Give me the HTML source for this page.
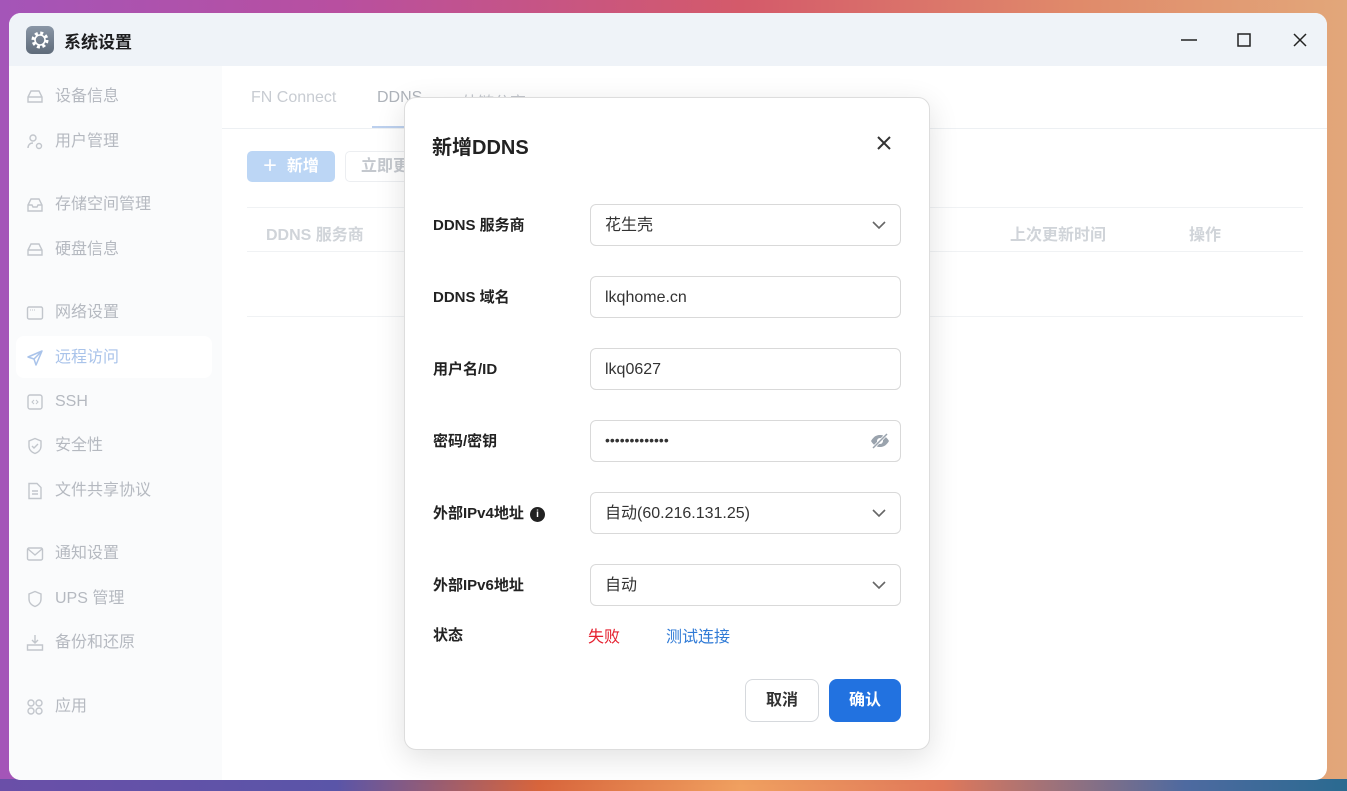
<!DOCTYPE html>
<html><head><meta charset="utf-8"><style>
*{box-sizing:border-box;margin:0;padding:0}
body{width:1347px;height:791px;overflow:hidden;position:relative;font-family:"Liberation Sans","Noto Sans CJK SC",sans-serif;
background:linear-gradient(90deg,#a455b8 0%,#b84fa0 25%,#d45a6a 55%,#e08a6a 80%,#e2a77a 100%);}
.bot{position:absolute;left:0;right:0;bottom:0;height:12px;background:linear-gradient(90deg,#6a4fa8 0%,#5a55a8 25%,#d8653c 40%,#f0a060 55%,#e0785a 70%,#4e6aa0 88%,#2a6a90 100%)}
.win{position:absolute;left:9px;top:13px;width:1318px;height:767px;background:#fff;border-radius:12px;overflow:hidden}
.tb{position:absolute;left:0;top:0;right:0;height:53px;background:#eff3f8}
.logo{position:absolute;left:17px;top:13px;width:28px;height:28px;border-radius:6px;background:linear-gradient(#8a96a6,#5f6b7a)}
.ttl{position:absolute;left:55px;top:15px;font-size:17px;font-weight:bold;color:#1d1d1f}
.side{position:absolute;left:0;top:53px;width:213px;bottom:0;background:#fafbfc}
.it{position:absolute;left:46px;font-size:16px;color:#b5b9c0;line-height:20px}
.ic{position:absolute;left:17px;width:18px;height:18px}
.act{position:absolute;left:7px;top:270px;width:196px;height:42px;background:#fff;border-radius:8px}
.c{position:absolute;color:#c4c8ce;font-size:16px}
.dlg{position:absolute;left:404px;top:97px;width:526px;height:653px;background:#fff;border-radius:12px;border:1px solid #ddd;box-shadow:0 8px 30px rgba(0,0,0,.12)}
.lb{position:absolute;left:28px;font-size:15px;font-weight:bold;color:#222}
.in{position:absolute;left:185px;width:311px;height:42px;border:1px solid #d9d9d9;border-radius:6px;font-size:16px;color:#333;padding-left:14px;line-height:41px}
.chev{position:absolute;right:14px;top:15px}
</style></head><body>
<div class="bot"></div>
<div class="win">
 <div class="tb">
  <div class="logo"><svg width="28" height="28" viewBox="0 0 28 28"><circle cx="14" cy="14" r="7" fill="none" stroke="#fff" stroke-width="3" stroke-dasharray="3 2.5"/><circle cx="14" cy="14" r="5" fill="none" stroke="#fff" stroke-width="1.6"/></svg></div>
  <div class="ttl">系统设置</div>
  <svg style="position:absolute;left:1170px;top:17px" width="20" height="20"><line x1="2" y1="10" x2="18" y2="10" stroke="#222" stroke-width="1.6"/></svg>
  <svg style="position:absolute;left:1225px;top:17px" width="20" height="20"><rect x="4" y="4" width="12" height="12" fill="none" stroke="#222" stroke-width="1.5"/></svg>
  <svg style="position:absolute;left:1281px;top:17px" width="20" height="20"><path d="M4 4L16 16M16 4L4 16" stroke="#222" stroke-width="1.5"/></svg>
 </div>
 <div class="side">
  <div class="act"></div>
  <svg class="ic" style="top:22px" viewBox="0 0 18 18"><path d="M2 9l3-6h8l3 6v5H2z M2 9h14" fill="none" stroke="#c2c6cc" stroke-width="1.4"/></svg><div class="it" style="top:21px">设备信息</div>
  <svg class="ic" style="top:67px" viewBox="0 0 18 18"><circle cx="7" cy="5" r="3" fill="none" stroke="#c2c6cc" stroke-width="1.4"/><path d="M2 15c0-3 2-5 5-5" fill="none" stroke="#c2c6cc" stroke-width="1.4"/><circle cx="13" cy="13" r="2.5" fill="none" stroke="#c2c6cc" stroke-width="1.4"/></svg><div class="it" style="top:66px">用户管理</div>
  <svg class="ic" style="top:130px" viewBox="0 0 18 18"><path d="M2 9l3-6h8l3 6v6H2z M2 9h4l1 2h4l1-2h4" fill="none" stroke="#c2c6cc" stroke-width="1.4"/></svg><div class="it" style="top:129px">存储空间管理</div>
  <svg class="ic" style="top:175px" viewBox="0 0 18 18"><path d="M2 9l3-6h8l3 6v5H2z M2 9h14" fill="none" stroke="#c2c6cc" stroke-width="1.4"/></svg><div class="it" style="top:174px">硬盘信息</div>
  <svg class="ic" style="top:238px" viewBox="0 0 18 18"><rect x="1.5" y="3" width="15" height="12" rx="1.5" fill="none" stroke="#c2c6cc" stroke-width="1.4"/><path d="M4 6h6" stroke="#c2c6cc" stroke-dasharray="1 1"/></svg><div class="it" style="top:237px">网络设置</div>
  <svg class="ic" style="top:283px" viewBox="0 0 18 18"><path d="M16 2L2 8l6 2 2 6z M8 10l8-8" fill="none" stroke="#a9c3ea" stroke-width="1.5" stroke-linejoin="round"/></svg><div class="it" style="top:282px;color:#a9c3ea">远程访问</div>
  <svg class="ic" style="top:327px" viewBox="0 0 18 18"><rect x="2" y="2" width="14" height="14" rx="2" fill="none" stroke="#c2c6cc" stroke-width="1.4"/><path d="M8 7L6 9l2 2M10 7l2 2-2 2" fill="none" stroke="#c2c6cc"/></svg><div class="it" style="top:326px">SSH</div>
  <svg class="ic" style="top:371px" viewBox="0 0 18 18"><path d="M9 1.5l6 2.5v5c0 4-3 6.5-6 7.5-3-1-6-3.5-6-7.5V4z" fill="none" stroke="#c2c6cc" stroke-width="1.4"/><path d="M6 9l2 2 4-4" fill="none" stroke="#c2c6cc" stroke-width="1.4"/></svg><div class="it" style="top:370px">安全性</div>
  <svg class="ic" style="top:416px" viewBox="0 0 18 18"><path d="M3 1.5h8l4 4v11H3z M6 9h6M6 12h6" fill="none" stroke="#c2c6cc" stroke-width="1.4"/></svg><div class="it" style="top:415px">文件共享协议</div>
  <svg class="ic" style="top:479px" viewBox="0 0 18 18"><rect x="1.5" y="3" width="15" height="12" rx="1.5" fill="none" stroke="#c2c6cc" stroke-width="1.4"/><path d="M2 4l7 6 7-6" fill="none" stroke="#c2c6cc" stroke-width="1.4"/></svg><div class="it" style="top:478px">通知设置</div>
  <svg class="ic" style="top:524px" viewBox="0 0 18 18"><path d="M9 1.5l6 2.5v5c0 4-3 6.5-6 7.5-3-1-6-3.5-6-7.5V4z" fill="none" stroke="#c2c6cc" stroke-width="1.4"/></svg><div class="it" style="top:523px">UPS 管理</div>
  <svg class="ic" style="top:568px" viewBox="0 0 18 18"><path d="M9 1v8M6 6l3 3 3-3M1.5 11h15v5h-15z" fill="none" stroke="#c2c6cc" stroke-width="1.4"/></svg><div class="it" style="top:567px">备份和还原</div>
  <svg class="ic" style="top:632px" viewBox="0 0 18 18"><g fill="none" stroke="#c2c6cc" stroke-width="1.4"><circle cx="5" cy="5" r="3"/><circle cx="13" cy="5" r="3"/><circle cx="5" cy="13" r="3"/><circle cx="13" cy="13" r="3"/></g></svg><div class="it" style="top:631px">应用</div>
 </div>
 <div class="c" style="left:242px;top:76px;color:#c8ccd2">FN Connect</div>
 <div class="c" style="left:368px;top:76px;color:#aeb3ba">DDNS</div>
 <div class="c" style="left:453px;top:76px">外链分享</div>
 <div style="position:absolute;left:213px;right:0;top:115px;height:1px;background:#edf0f3"></div>
 <div style="position:absolute;left:363px;top:113px;width:50px;height:2px;background:#bcd0ee"></div>
 <div style="position:absolute;left:238px;top:138px;width:88px;height:31px;border-radius:5px;background:#bcd6f5;color:#fff;font-size:16px;font-weight:bold;line-height:31px;padding-left:15px">＋&nbsp; 新增</div>
 <div style="position:absolute;left:336px;top:138px;width:90px;height:31px;border-radius:5px;border:1px solid #eceef1;color:#c4c8ce;font-size:16px;font-weight:bold;line-height:29px;padding-left:15px">立即更新</div>
 <div style="position:absolute;left:238px;right:24px;top:194px;height:1px;background:#f0f2f4"></div>
 <div style="position:absolute;left:238px;right:24px;top:238px;height:1px;background:#f0f2f4"></div>
 <div style="position:absolute;left:238px;right:24px;top:303px;height:1px;background:#f0f2f4"></div>
 <div class="c" style="left:257px;top:208px;font-weight:bold;color:#d0d4d9">DDNS 服务商</div>
 <div class="c" style="left:1001px;top:208px;font-weight:bold;color:#d0d4d9">上次更新时间</div>
 <div class="c" style="left:1180px;top:208px;font-weight:bold;color:#d0d4d9">操作</div>
</div>
<div class="dlg">
 <div style="position:absolute;left:27px;top:33px;font-size:20px;font-weight:bold;color:#222">新增DDNS</div>
 <svg style="position:absolute;left:470px;top:36px" width="18" height="18"><path d="M3 3L15 15M15 3L3 15" stroke="#333" stroke-width="2"/></svg>
 <div class="lb" style="top:116px">DDNS 服务商</div>
 <div class="in" style="top:106px">花生壳<svg class="chev" width="14" height="10"><path d="M1 2l6 6 6-6" fill="none" stroke="#666" stroke-width="1.6"/></svg></div>
 <div class="lb" style="top:188px">DDNS 域名</div>
 <div class="in" style="top:178px">lkqhome.cn</div>
 <div class="lb" style="top:260px">用户名/ID</div>
 <div class="in" style="top:250px">lkq0627</div>
 <div class="lb" style="top:332px">密码/密钥</div>
 <div class="in" style="top:322px"><span style="font-size:14px;position:relative;top:-1px">•••••••••••••</span><svg style="position:absolute;right:10px;top:12px" width="20" height="16" viewBox="0 0 20 16"><path d="M1 8c3-5 6-6 9-6s6 1 9 6c-3 5-6 6-9 6s-6-1-9-6z" fill="#9aa3ad"/><circle cx="10" cy="8" r="3" fill="#fff"/><path d="M3 15L17 1" stroke="#fff" stroke-width="3"/><path d="M3 15L17 1" stroke="#9aa3ad" stroke-width="1.5"/></svg></div>
 <div class="lb" style="top:404px">外部IPv4地址 <span style="display:inline-block;width:15px;height:15px;border-radius:50%;background:#222;color:#fff;font-size:10px;text-align:center;line-height:15px;vertical-align:1px;margin-left:2px">i</span></div>
 <div class="in" style="top:394px">自动(60.216.131.25)<svg class="chev" width="14" height="10"><path d="M1 2l6 6 6-6" fill="none" stroke="#666" stroke-width="1.6"/></svg></div>
 <div class="lb" style="top:476px">外部IPv6地址</div>
 <div class="in" style="top:466px">自动<svg class="chev" width="14" height="10"><path d="M1 2l6 6 6-6" fill="none" stroke="#666" stroke-width="1.6"/></svg></div>
 <div class="lb" style="top:526px">状态</div>
 <div style="position:absolute;left:183px;top:525px;font-size:16px;color:#e5202f">失败</div>
 <div style="position:absolute;left:261px;top:525px;font-size:16px;color:#2f7ad6">测试连接</div>
 <div style="position:absolute;left:340px;top:581px;width:74px;height:43px;border:1px solid #d6d9dd;border-radius:8px;font-size:16px;font-weight:bold;color:#333;text-align:center;line-height:41px">取消</div>
 <div style="position:absolute;left:424px;top:581px;width:72px;height:43px;background:#2272e0;border-radius:8px;font-size:16px;font-weight:bold;color:#fff;text-align:center;line-height:43px">确认</div>
</div>
</body></html>
